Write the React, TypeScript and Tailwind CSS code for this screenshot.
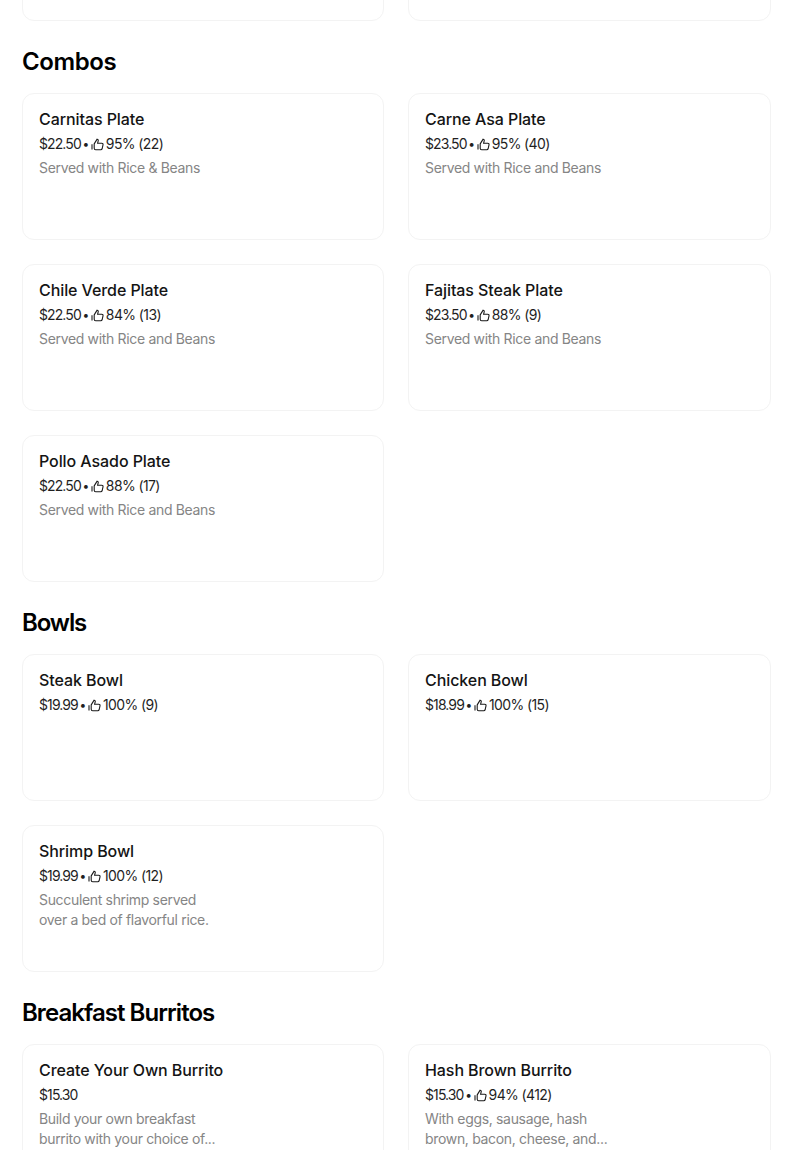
const FONT = "font-['Inter','Liberation_Sans',sans-serif]";

type Item = {
  name: string;
  price: string;
  rating?: string;
  desc?: string[];
};

const TOP: Item[] = [
  { name: "", price: "" },
  { name: "", price: "" },
];

const SECTIONS: { title: string; tracking: string; items: Item[] }[] = [
  {
    title: "Combos",
    tracking: "tracking-[-0.4px]",
    items: [
      { name: "Carnitas Plate", price: "$22.50", rating: "95% (22)", desc: ["Served with Rice & Beans"] },
      { name: "Carne Asa Plate", price: "$23.50", rating: "95% (40)", desc: ["Served with Rice and Beans"] },
      { name: "Chile Verde Plate", price: "$22.50", rating: "84% (13)", desc: ["Served with Rice and Beans"] },
      { name: "Fajitas Steak Plate", price: "$23.50", rating: "88% (9)", desc: ["Served with Rice and Beans"] },
      { name: "Pollo Asado Plate", price: "$22.50", rating: "88% (17)", desc: ["Served with Rice and Beans"] },
    ],
  },
  {
    title: "Bowls",
    tracking: "tracking-[-1.1px]",
    items: [
      { name: "Steak Bowl", price: "$19.99", rating: "100% (9)" },
      { name: "Chicken Bowl", price: "$18.99", rating: "100% (15)" },
      { name: "Shrimp Bowl", price: "$19.99", rating: "100% (12)", desc: ["Succulent shrimp served", "over a bed of flavorful rice."] },
    ],
  },
  {
    title: "Breakfast Burritos",
    tracking: "tracking-[-0.95px]",
    items: [
      { name: "Create Your Own Burrito", price: "$15.30", desc: ["Build your own breakfast", "burrito with your choice of..."] },
      { name: "Hash Brown Burrito", price: "$15.30", rating: "94% (412)", desc: ["With eggs, sausage, hash", "brown, bacon, cheese, and..."] },
    ],
  },
];

function ThumbIcon() {
  return (
    <svg width="13" height="13" viewBox="0 0 13 13" fill="none" stroke="#1a1a1a" strokeWidth="1.1" className="shrink-0">
      <path d="M1 6.2V11.6" />
      <path d="M3.2 5.9 6.1 1.2c1 .2 1.3.9 1.1 1.7l-.6 2.3h4.1c1 0 1.5.7 1.3 1.6l-.8 3.7c-.2.8-.7 1.3-1.5 1.3H4.7c-.9 0-1.5-.6-1.5-1.5Z" />
    </svg>
  );
}

function MenuCard({ item }: { item: Item }) {
  return (
    <div className="h-[147px] overflow-hidden rounded-xl border border-[#f3f3f3] bg-white px-4 pt-[15px]">
      <div className="text-base leading-5 font-medium tracking-[-0.08px] text-[#141414]">{item.name}</div>
      <div className="mt-[5px] flex h-5 items-center text-sm leading-5 text-[#1f1f1f]">
        <span className="tracking-[-0.9px]">{item.price}</span>
        {item.rating && (
          <>
            <span className="w-[10px] text-center text-xs">•</span>
            <ThumbIcon />
            <span className="ml-[2px] tracking-[-0.6px]">{item.rating}</span>
          </>
        )}
      </div>
      {item.desc && (
        <div className="mt-1 text-sm leading-5 tracking-[-0.33px] text-[#858585]">
          {item.desc.map((line) => (
            <div key={line}>{line}</div>
          ))}
        </div>
      )}
    </div>
  );
}

export default function App() {
  return (
    <div className={`h-[1150px] overflow-hidden bg-white px-[22px] ${FONT}`}>
      <div className="-mt-[126px] grid grid-cols-[362px_363px] gap-6">
        {TOP.map((item, i) => (
          <MenuCard key={i} item={item} />
        ))}
      </div>
      {SECTIONS.map((section) => (
        <section key={section.title}>
          <h2 className={`mt-[26px] mb-4 h-[30px] text-2xl leading-[30px] font-semibold text-black ${section.tracking}`}>
            {section.title}
          </h2>
          <div className="grid grid-cols-[362px_363px] gap-6">
            {section.items.map((item) => (
              <MenuCard key={item.name} item={item} />
            ))}
          </div>
        </section>
      ))}
    </div>
  );
}
